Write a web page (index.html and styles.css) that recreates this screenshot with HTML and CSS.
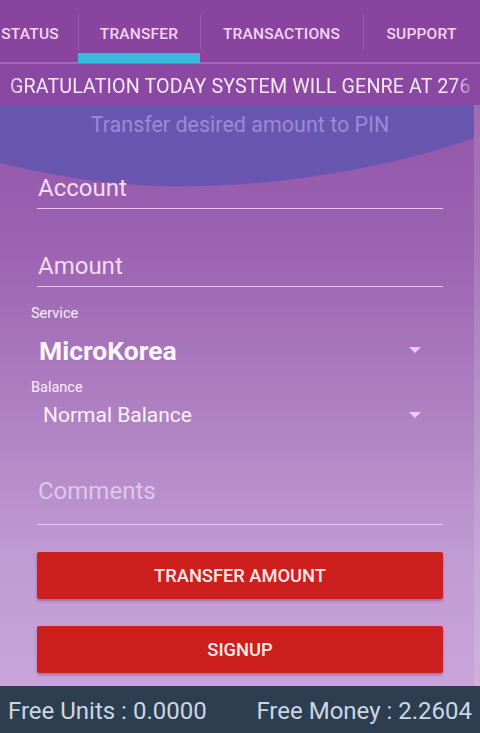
FILE: index.html
```html
<!DOCTYPE html>
<html>
<head>
<meta charset="utf-8">
<link rel="stylesheet" href="styles.css">
</head>
<body>
<div class="app">
  <div class="tabs">
    <div class="tab tab-status">STATUS</div>
    <div class="tab tab-transfer active">TRANSFER</div>
    <div class="tab tab-transactions">TRANSACTIONS</div>
    <div class="tab tab-support">SUPPORT</div>
  </div>
  <div class="marquee"><span class="marquee-text">GRATULATION TODAY SYSTEM WILL GENRE AT 276</span></div>
  <div class="content">
    <svg class="wave" viewBox="0 0 474 90" preserveAspectRatio="none" aria-hidden="true">
      <path d="M0,0 H474 V33 C380,66 260,84 160,81 C90,79 35,66 0,58 Z" fill="#6856b0"/>
    </svg>
    <div class="intro">Transfer desired amount to PIN</div>
    <div class="form">
      <div class="field field-account"><span class="field-text">Account</span></div>
      <div class="field field-amount"><span class="field-text">Amount</span></div>
      <div class="label label-service">Service</div>
      <div class="select select-service">
        <span class="select-value bold">MicroKorea</span>
        <span class="caret"></span>
      </div>
      <div class="label label-balance">Balance</div>
      <div class="select select-balance">
        <span class="select-value">Normal Balance</span>
        <span class="caret"></span>
      </div>
      <div class="field field-comments"><span class="field-text faded">Comments</span></div>
      <button class="btn btn-transfer">TRANSFER AMOUNT</button>
      <button class="btn btn-signup">SIGNUP</button>
    </div>
  </div>
  <div class="footer">
    <span>Free Units : 0.0000</span>
    <span>Free Money : 2.2604</span>
  </div>
</div>
</body>
</html>
```

FILE: styles.css
```css
* { box-sizing: border-box; }
html, body { margin: 0; padding: 0; }
body {
  font-family: Roboto, "Liberation Sans", sans-serif;
  width: 480px;
  height: 733px;
  overflow: hidden;
}
.app {
  width: 480px;
  height: 733px;
  display: flex;
  flex-direction: column;
  background: #8a47a1;
}
.tabs {
  height: 64px;
  display: flex;
  margin-left: -18px;
  border-bottom: 2px solid #a466bb;
  background: #8944a0;
  flex: none;
}
.tab {
  position: relative;
  height: 62px;
  display: flex;
  align-items: center;
  justify-content: center;
  padding-top: 5px;
  color: #f3d6f3;
  font-size: 15.5px;
  font-weight: 500;
  letter-spacing: 0.2px;
}
.tab + .tab::before {
  content: "";
  position: absolute;
  left: 0;
  top: 14px;
  height: 36px;
  border-left: 1px solid #9b5bb2;
}
.tab-status { width: 96px; }
.tab-transfer { width: 122px; }
.tab-transactions { width: 163px; }
.tab-support { width: 117px; }
.tab.active::after {
  content: "";
  position: absolute;
  left: 0;
  right: 0;
  bottom: -1px;
  height: 10px;
  background: #3cb8df;
}
.marquee {
  height: 41px;
  flex: none;
  display: flex;
  align-items: center;
  padding-left: 10px;
  padding-top: 3px;
  overflow: hidden;
  white-space: nowrap;
  background: #8a48a2;
  -webkit-mask-image: linear-gradient(to right, rgba(0,0,0,0.5) 0, #000 22px, #000 455px, rgba(0,0,0,0.25) 472px);
}
.marquee-text {
  color: #f7e7f7;
  font-size: 19.7px;
  letter-spacing: 0.1px;
}
.content {
  position: relative;
  flex: 1;
  background: linear-gradient(to bottom, #9356aa 0%, #9c63b2 25%, #b083c3 55%, #c29dd4 80%, #c9a4da 100%);
  border-right: 6px solid rgba(255,255,255,0.13);
  overflow: hidden;
}
.wave {
  position: absolute;
  left: 0;
  top: 0;
  width: 474px;
  height: 90px;
}
.intro {
  position: relative;
  text-align: center;
  color: #9a8ad9;
  font-size: 21.5px;
  padding-top: 7px;
  height: 58px;
  padding-left: 6px;
}
.form {
  position: relative;
  padding: 0 31px 0 37px;
  display: flex;
  flex-direction: column;
}
.field {
  height: 46px;
  display: flex;
  align-items: flex-end;
  padding-left: 1px;
  padding-bottom: 6px;
  border-bottom: 1.5px solid #e9c6f1;
}
.field-text {
  color: #f4dbf6;
  font-size: 24px;
  line-height: 28px;
}
.field-text.faded { color: #dfc6ea; }
.field-amount { margin-top: 32px; }
.label {
  color: #fbeefb;
  font-size: 14.5px;
  margin-left: -6px;
}
.label-service { margin-top: 18px; }
.select {
  display: flex;
  align-items: center;
  justify-content: space-between;
  padding-right: 22px;
}
.select-service { height: 44px; margin-top: 6px; }
.select-balance { height: 36px; margin-top: 1px; }
.label-balance { margin-top: 7px; }
.select-value {
  color: #fbf1fb;
  font-size: 21px;
}
.select-service .select-value { margin-left: 2px; }
.select-balance .select-value { margin-left: 6px; }
.select-value.bold {
  font-weight: 700;
  font-size: 26.5px;
  color: #fdf5fd;
}
.caret {
  width: 0;
  height: 0;
  border-left: 6px solid transparent;
  border-right: 6px solid transparent;
  border-top: 6px solid #eccdf0;
}
.field-comments {
  margin-top: 21px;
  height: 71px;
  padding-bottom: 19px;
}
.btn {
  display: block;
  width: 406px;
  border: none;
  border-radius: 2px;
  background: #cd1f1e;
  color: #fde9e7;
  font-family: Roboto, "Liberation Sans", sans-serif;
  font-weight: 500;
  font-size: 18.3px;
  box-shadow: 0 2px 3px rgba(90, 20, 60, 0.35);
  padding: 0;
}
.btn-transfer { height: 47px; margin-top: 27px; }
.btn-signup { height: 47px; margin-top: 27px; }
.footer {
  height: 47px;
  flex: none;
  background: #2d3e50;
  display: flex;
  align-items: center;
  justify-content: space-between;
  padding: 2px 8px 0 8px;
  color: #ccd7e3;
  font-size: 24px;
}
```
